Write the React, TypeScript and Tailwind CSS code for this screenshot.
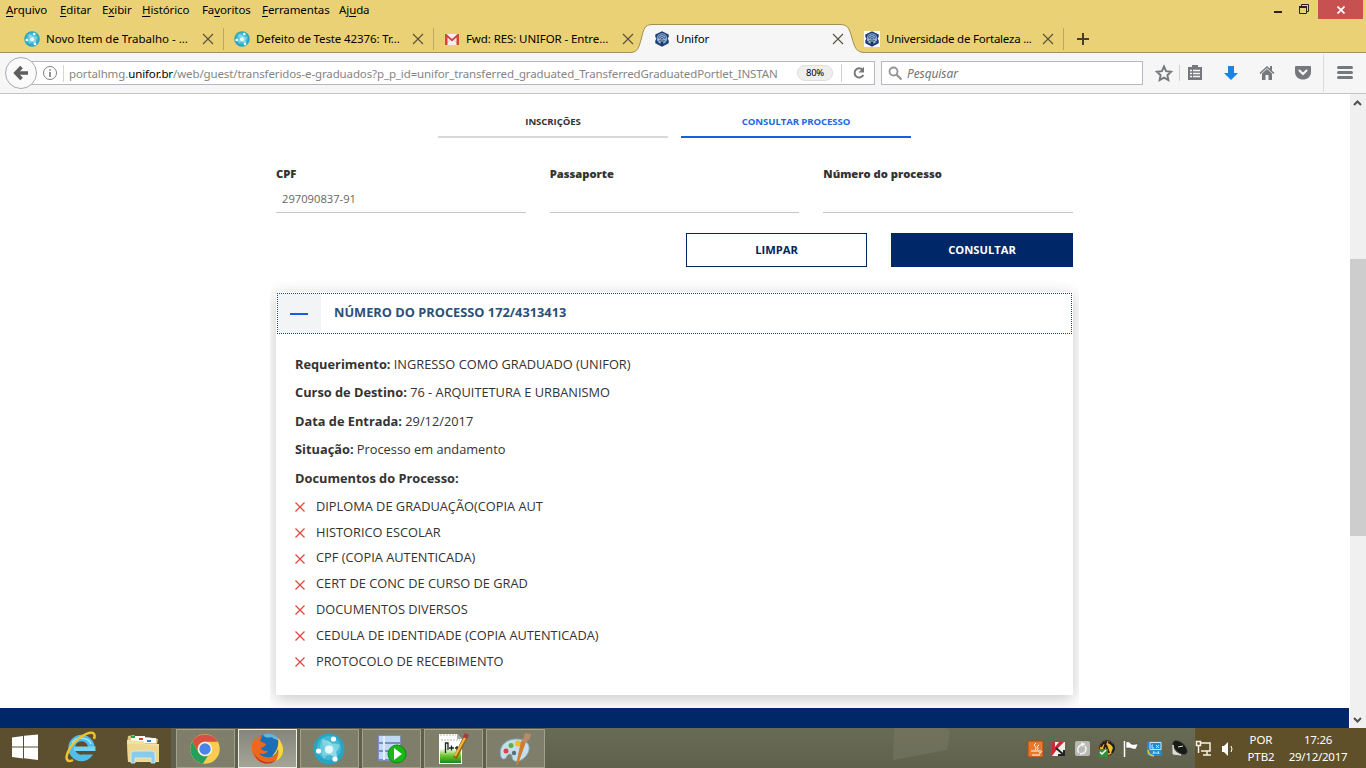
import React from "react";

const globe = (
  <>
    <circle cx="16" cy="16" r="15.5" fill="#26a6c4" />
    <circle cx="16" cy="15" r="12" fill="#54c3da" opacity=".6" />
    <path d="M9 7c7-1 14 4 15 17-7 0-13-5-15-17Z" fill="#a5e3ec" opacity=".8" />
    <path d="M27 12c-2 8-9 12-18 10 1-9 9-14 18-10Z" fill="#8fdbe8" opacity=".75" />
    <path d="M10 5c7 4 8 14 1 21-5-7-5-15-1-21Z" fill="#7ed3e2" opacity=".65" />
    <circle cx="16" cy="16.5" r="4" fill="#e4fafc" />
    <circle cx="20.5" cy="6" r="2.6" fill="#fff" />
    <circle cx="5.5" cy="18" r="2.6" fill="#fff" />
    <circle cx="22" cy="26" r="2.6" fill="#fff" />
  </>
);

const GlobeIcon = ({ className }: { className: string }) => (
  <svg viewBox="0 0 32 32" className={className}>{globe}</svg>
);

const GmailIcon = () => (
  <svg viewBox="0 0 16 16" className="size-4 shrink-0">
    <path d="M1 3h14v11H1z" fill="#f3f1ee" />
    <path d="M3 12l5-5 5 5" fill="none" stroke="#d5d0cc" />
    <path d="M1 14V3h1.500L8 8l5.500-5H15v11h-2.500V6.500L8 10.500l-4.500-4V14Z" fill="#d8453a" />
  </svg>
);

const UniforIcon = ({ boxed = false }: { boxed?: boolean }) => (
  <svg viewBox="0 0 16 16" className="size-4 shrink-0">
    {boxed && <path d="M0 0h16v16H0z" fill="#fff" />}
    <path d="M8 .3 14.700 3.500V6L13.700 7.500l1 2v2.700L8 15.700 1.300 12.200V9.500l1-2L1.300 6V3.500Z" fill="#1c3f78" />
    <circle cx="8" cy="7.500" r="5.200" fill="#9db5d2" />
    <path d="M4 7.500a4 4 0 0 1 8 0M5.500 8a2.500 2.500 0 0 1 5 0M4.500 10.500C6 8.500 10 8.500 11.500 10.500M7 7.500h2" fill="none" stroke="#23497f" strokeWidth=".8" />
    <path d="M6.500 10.500h3l-.5 4H7Z" fill="#15386c" />
  </svg>
);

const CloseX = () => (
  <svg viewBox="0 0 12 12" className="size-3 shrink-0">
    <path d="M1 1l10 10M11 1 1 11" stroke="#58503a" strokeWidth="1.1" />
  </svg>
);

type TabProps = { icon: React.ReactNode; title: string; track: string; active?: boolean; sep?: boolean };

const Tab = ({ icon, title, track, active, sep }: TabProps) => (
  <div className="relative flex h-7 w-[210px] items-center pl-2.5">
    {active && (
      <svg viewBox="0 0 236 30" className="absolute -left-[13px] top-0 h-[30px] w-[236px]">
        <path d="M0 28.500C7 28 8 23 10.500 14 12.500 5 14 .5 21 .5H209C217 .5 218.500 5 221 14c2.500 9 4 14.500 13 14.500L236 30H0Z" fill="#f6f6f6" />
        <path d="M0 28.500C7 28 8 23 10.500 14 12.500 5 14 .5 21 .5H209C217 .5 218.500 5 221 14c2.500 9 4 14.500 13 14.500" fill="none" stroke="#a18d4d" />
      </svg>
    )}
    <div className="relative flex w-full items-center pt-0.5">
      {icon}
      <span className={`ml-1.5 w-[156px] whitespace-nowrap text-[11.5px] leading-5 ${track}`}>{title}</span>
      <CloseX />
    </div>
    {sep && <span className="absolute right-0 top-1 h-[22px] w-px bg-[#bca766]" />}
  </div>
);

const menu = [
  ["", "A", "rquivo", "w-[54px]"],
  ["", "E", "ditar", "w-[42px]"],
  ["E", "x", "ibir", "w-10"],
  ["", "H", "istórico", "w-[60px]"],
  ["Fa", "v", "oritos", "w-[60px]"],
  ["", "F", "erramentas", "w-[77px]"],
  ["Aj", "u", "da", "w-[50px]"],
];

const Chrome = () => (
  <header className="h-[94px] shrink-0 bg-[#ebd176] text-black">
    <div className="flex h-6 items-start justify-between">
      <nav className="flex pl-1.5 text-[11.5px] leading-5 tracking-[-0.1px]">
        {menu.map(([a, u, b, c]) => (
          <span key={u + b} className={c}>{a}<span className="underline underline-offset-2">{u}</span>{b}</span>
        ))}
      </nav>
      <div className="flex h-[19px] pr-[3px]">
        <svg viewBox="0 0 50 19" className="h-[19px] w-[50px]">
          <path d="M6 11h8v2H6z" fill="#28251a" />
          <path d="M31.500 6.500h7v7h-7zM33.500 6V4.500h7v7H39" fill="none" stroke="#28251a" />
          <path d="M31 6h8v2h-8z" fill="#28251a" />
        </svg>
        <div className="flex w-[45px] items-center justify-center bg-[#c75050]">
          <svg viewBox="0 0 8 8" className="size-2"><path d="M.5.5l7 7m0-7-7 7" stroke="#fff" strokeWidth="1.7" /></svg>
        </div>
      </div>
    </div>
    <div className="flex h-[29px] border-b border-[#a3935b] pl-3.5">
      <Tab icon={<GlobeIcon className="size-4 shrink-0" />} title="Novo Item de Trabalho - ..." track="tracking-[-0.02px]" sep />
      <Tab icon={<GlobeIcon className="size-4 shrink-0" />} title="Defeito de Teste 42376: Tr..." track="tracking-[-0.12px]" sep />
      <Tab icon={<GmailIcon />} title="Fwd: RES: UNIFOR - Entre..." track="tracking-[-0.1px]" />
      <Tab icon={<UniforIcon />} title="Unifor" track="tracking-[-0.2px]" active />
      <Tab icon={<UniforIcon boxed />} title="Universidade de Fortaleza ..." track="tracking-[-0.23px]" sep />
      <svg viewBox="0 0 12 12" className="ml-[13px] mt-[9px] size-3"><path d="M6 0v12M0 6h12" stroke="#45412f" strokeWidth="2" /></svg>
    </div>
    <div className="flex h-[41px] items-center border-b border-[#c3c3c6] bg-[#f6f6f6]">
      <div className="relative z-10 ml-[5px] flex size-8 shrink-0 items-center justify-center rounded-full border border-[#a8abb3] bg-[#fafafa]">
        <svg viewBox="0 0 16 16" className="size-4"><path d="M8.500 2 2.800 8l5.700 6M3.500 8H15" fill="none" stroke="#5e5e60" strokeWidth="3.6" /></svg>
      </div>
      <div className="-ml-4 flex h-6 w-[854px] shrink-0 items-center border border-[#b4b8c6] bg-white pl-[20px]">
        <svg viewBox="0 0 16 16" className="size-4 shrink-0">
          <circle cx="8" cy="8" r="6.5" fill="none" stroke="#808080" />
          <path d="M7.200 7h1.600v5H7.200zM7.200 4.200h1.600v1.600H7.200z" fill="#777" />
        </svg>
        <span className="ml-[5px] h-[17px] w-px shrink-0 bg-[#d5d5d8]" />
        <span className="ml-[5px] w-[710px] shrink-0 whitespace-nowrap pt-px text-[11.5px] tracking-[-0.12px] text-[#858585]">
          portalhmg.<span className="text-black">unifor.br</span>/web/guest/transferidos-e-graduados?p_p_id=unifor_transferred_graduated_TransferredGraduatedPortlet_INSTAN
        </span>
        <span className="ml-[18px] flex h-4 w-9 shrink-0 items-center justify-center rounded-full border border-[#dedede] bg-[#efefef] text-[9.5px] tracking-[-0.3px]">80%</span>
        <span className="ml-2 h-[18px] w-px shrink-0 bg-[#d0d0d3]" />
        <svg viewBox="0 0 14 14" className="ml-2.5 size-3.5 shrink-0">
          <path d="M10.600 3.800A4.600 4.600 0 1 0 11.300 9" fill="none" stroke="#77777a" strokeWidth="2" />
          <path d="M12 .8v5.700H6.500Z" fill="#77777a" />
        </svg>
      </div>
      <div className="ml-[6px] flex h-6 w-[262px] shrink-0 items-center border border-[#b4b8c6] bg-white pl-1.5">
        <svg viewBox="0 0 14 14" className="size-3.5"><circle cx="5.5" cy="5.5" r="4" fill="none" stroke="#949494" strokeWidth="1.8" /><path d="m8.500 8.500 5 5" stroke="#949494" strokeWidth="2.2" /></svg>
        <span className="ml-[5px] pt-px text-[12px] italic tracking-[-0.1px] text-[#737373]">Pesquisar</span>
      </div>
      <svg viewBox="0 0 223 40" className="h-10 w-[223px] shrink-0" fill="none" stroke="#77787d">
        <path d="m21 13.500 2.100 4.700 5 .6-3.700 3.400 1 5-4.400-2.500-4.400 2.500 1-5-3.700-3.400 5-.6Z" strokeWidth="1.9" />
        <path d="M36.500 12v16" stroke="#d0d0d2" />
        <path d="M45 14h14v13H45z" fill="#77787d" stroke="none" />
        <path d="M49 12h6v3h-6z" fill="#77787d" stroke="none" />
        <path d="M47 17.500h2m1 0h7M47 20.500h2m1 0h7M47 23.500h2m1 0h7" stroke="#f6f6f6" strokeWidth="1.6" />
        <path d="M85 13h6v7h4l-7 7-7-7h4Z" fill="#1b82e8" stroke="none" />
        <path d="m117 20.500 7-6.500 7 6.500" strokeWidth="1.6" />
        <path d="m119 20.500 5-4.500 5 4.500V27h-3.500v-5h-3v5H119ZM127 13h2v4h-2Z" fill="#77787d" stroke="none" />
        <path d="M152 14q0-1 1-1h14q1 0 1 1v5c0 10-16 10-16 0Z" fill="#77787d" stroke="none" />
        <path d="m156.500 17.500 3.500 3.500 3.500-3.500" stroke="#f6f6f6" strokeWidth="2.1" strokeLinecap="round" />
        <path d="M180.500 1v38" stroke="#dcdcde" />
        <path d="M195.500 14.500h13M195.500 19.500h13M195.500 24.500h13" strokeWidth="3" strokeLinecap="round" />
      </svg>
    </div>
  </header>
);

const Field = ({ label, value }: { label: string; value?: string }) => (
  <label className="flex h-[50px] flex-col border-b border-[#c6c6c6]">
    <span className="h-[21px] text-[11.2px] font-extrabold leading-[21px] text-[#333]">{label}</span>
    <span className="pl-1.5 pt-[5px] text-[11.2px] leading-[20px] text-[#666]">{value}</span>
  </label>
);

const details = [
  ["Requerimento:", "INGRESSO COMO GRADUADO (UNIFOR)"],
  ["Curso de Destino:", "76 - ARQUITETURA E URBANISMO"],
  ["Data de Entrada:", "29/12/2017"],
  ["Situação:", "Processo em andamento"],
  ["Documentos do Processo:", ""],
];

const docs = [
  "DIPLOMA DE GRADUAÇÃO(COPIA AUT",
  "HISTORICO ESCOLAR",
  "CPF (COPIA AUTENTICADA)",
  "CERT DE CONC DE CURSO DE GRAD",
  "DOCUMENTOS DIVERSOS",
  "CEDULA DE IDENTIDADE (COPIA AUTENTICADA)",
  "PROTOCOLO DE RECEBIMENTO",
];

const Page = () => (
  <div className="flex h-[634px] w-[1350px] flex-col bg-white font-['Open_Sans',sans-serif]">
    <div className="ml-[438px] flex gap-[13px] pt-[11px] text-center text-[9.6px] font-bold leading-[33px] tracking-[-0.1px]">
      <div className="h-[33px] w-[230px] border-b-2 border-[#d9d9d9] text-[#333]">INSCRIÇÕES</div>
      <div className="h-[33px] w-[230px] border-b-2 border-[#0f63e0] text-[#1f66e6]">CONSULTAR PROCESSO</div>
    </div>
    <div className="ml-[276px] mt-[25px] grid w-[797px] grid-cols-3 gap-6">
      <Field label="CPF" value="297090837-91" />
      <Field label="Passaporte" />
      <Field label="Número do processo" />
    </div>
    <div className="ml-[686px] mt-5 flex gap-6 text-[11.2px] font-bold">
      <button className="h-[34px] w-[181px] border border-[#002561] text-[#002561]">LIMPAR</button>
      <button className="h-[34px] w-[182px] bg-[#002868] text-white">CONSULTAR</button>
    </div>
    <div className="ml-[270px] h-[441px] w-[809px] overflow-hidden px-1.5 pt-[25px]">
      <section className="h-[403px] bg-white p-px text-[12.8px] text-[#333] shadow-[0_4px_16px_rgba(0,0,0,0.22)]">
        <div className="flex h-[41px] items-stretch border border-dotted border-[#1d4a6e]">
          <div className="flex w-[43px] items-center bg-[#f3f4f6] pl-3"><span className="h-0.5 w-[18px] bg-[#0f63e0]" /></div>
          <h2 className="ml-[13px] text-[12.8px] font-bold leading-[37px] text-[#2b5077]">NÚMERO DO PROCESSO 172/4313413</h2>
        </div>
        <div className="pl-[18px] pt-[15.9px]">
          {details.map(([k, v]) => (
            <p key={k} className="h-[28.5px] whitespace-nowrap leading-[28px]"><b>{k}</b> {v}</p>
          ))}
          <ul className="pt-[1.5px]">
            {docs.map((d) => (
              <li key={d} className="flex h-[25.8px] items-center whitespace-nowrap leading-[25.8px]">
                <svg viewBox="0 0 10 10" className="mr-[11px] mt-px size-2.5"><path d="M.5.5l9 9m0-9-9 9" stroke="#e24840" strokeWidth="1.3" /></svg>
                <span>{d}</span>
              </li>
            ))}
          </ul>
        </div>
      </section>
    </div>
    <div className="h-5 w-[1349px] shrink-0 bg-[#002868]" />
  </div>
);

const ScrollBar = () => (
  <div className="flex w-4 flex-col justify-between bg-[#f0f0f0]">
    <svg viewBox="0 0 16 17" className="h-[17px] w-4"><path d="m4 11 3.500-3.500L11 11" fill="none" stroke="#505050" strokeWidth="2" /></svg>
    <div className="mb-[175px] mt-[148px] flex-1 bg-[#cdcdcd]" />
    <svg viewBox="0 0 16 17" className="h-[17px] w-4"><path d="m4 7 3.500 3.500L11 7" fill="none" stroke="#505050" strokeWidth="2" /></svg>
  </div>
);

const TaskButton = ({ children, active = false }: { children: React.ReactNode; active?: boolean }) => (
  <div className={`flex h-[39px] w-[58.5px] items-center justify-center border ${active ? "border-[#eeeee8] bg-linear-to-b from-[#85857c] to-[#a5a597]" : "border-[#a2a28c] bg-[#7e7e6a]"}`}>
    {children}
  </div>
);

const big = "size-8";

const TaskBar = () => (
  <footer className="flex h-10 text-white">
    <div className="h-10 w-[171px] bg-[#5b4f2f]">
      <svg viewBox="0 0 171 40" className="h-10 w-[171px]">
        <path d="M12 9.500 23 8v10.500H12Zm12-1.700L38 6.500v12H24ZM12 19.500h11V30.500l-11-1.500Zm12 0h14v12.500l-14-1.700Z" fill="#fff" />
        <circle cx="81.500" cy="20" r="10" fill="none" stroke="#51bdea" strokeWidth="6.500" />
        <path d="M74 18.500h21.500v4.500H74Z" fill="#74d5f5" />
        <path d="M84 23h13v3.500H84Z" fill="#5b4f2f" />
        <path d="M72 15c3-6 16-7 19 1" fill="none" stroke="#a3e6fb" strokeWidth="1.5" />
        <path d="M73 32c-6 3-8-1-5-8C73 12 88 3 93 5c2 1 2 3 1 6" fill="none" stroke="#f2c22e" strokeWidth="2.5" />
        <path d="m128 8 6-1 2 2h12l10 2-1 5H127Z" fill="#d8c887" />
        <path d="M131 8h14v5h-14zM142 10h14v5h-14z" fill="#fff" />
        <path d="M131 8h4v2h-4z" fill="#25a53b" /><path d="M139 10h4v2h-4z" fill="#d44435" /><path d="M147 12h4v2h-4z" fill="#2684d0" />
        <path d="m127 12 17 1 1 3h14v18h-31Z" fill="#f4e2a0" />
        <path d="M127 16h12l20 2v15l-31 1Z" fill="#ebd286" opacity=".7" />
        <path d="M131 35V26q0-3 3-3h18q3 0 3 3v9h-4v-5h-16v5Z" fill="#8bcbea" stroke="#d4f2fc" strokeWidth=".8" />
      </svg>
    </div>
    <div className="flex w-[1024px] justify-between bg-linear-to-b from-[#686b54] to-[#60614d]">
      <div className="flex gap-[3.5px] bg-[#5f604b] pl-[5px] pt-px">
        <TaskButton>
          <svg viewBox="0 0 32 32" className={big}>
            <circle cx="16" cy="16" r="14.7" fill="#f9ce50" />
            <path d="M3.300 8.700A14.700 14.700 0 0 1 28.700 8.700H16a7.300 7.300 0 0 0-6.400 11Z" fill="#d94f41" />
            <path d="M3.300 8.700 9.700 19.700A7.300 7.300 0 0 0 19 22.700l-5 7.900A14.700 14.700 0 0 1 3.300 8.700Z" fill="#24a05b" />
            <circle cx="16" cy="16" r="7.2" fill="#f5f5ee" /><circle cx="16" cy="16" r="5.7" fill="#4b83e8" />
          </svg>
        </TaskButton>
        <TaskButton active>
          <svg viewBox="0 0 32 32" className={big}>
            <circle cx="17" cy="15" r="14" fill="#1c6fb5" />
            <path d="M12 2c6-3 15 0 18 7-3-3-7-2-9-5-3 1-7 1-9-2Z" fill="#64b4e2" />
            <path d="M3 5c-1 4-3 8-2 13 3 12 14 16 24 9 6-4 7-12 4-19 1 8-3 14-9 16-5 1-9 0-12-4 4 2 7 1 9-2-3 0-6 0-7-3 2-1 5-2 5-4l-6-3 2-5c-3 0-5 2-6 4Z" fill="#ed681f" />
            <path d="M27 5c8 9 6 19-2 23 2-5 3-8 2-12-1 4-3 6-6 7 5-5 7-10 6-18Z" fill="#fbd63c" />
            <path d="M3 20c5 9 14 12 22 7-7 7-19 3-22-7Z" fill="#b92e24" />
          </svg>
        </TaskButton>
        <TaskButton><GlobeIcon className={big} /></TaskButton>
        <TaskButton>
          <svg viewBox="0 0 32 32" className={big}>
            <path d="M3 2h23v26H3z" fill="#7892ba" />
            <path d="M4 3h21v6H4zM4 11h21v6H4zM4 19h21v7H4z" fill="#c3d8f5" /><path d="M9 3v24" stroke="#e3eefd" strokeWidth="2" />
            <circle cx="22" cy="21" r="9" fill="#18b817" stroke="#108710" /><path d="m19 15 8 6-8 6Z" fill="#fff" />
          </svg>
        </TaskButton>
        <TaskButton>
          <svg viewBox="0 0 32 32" className={big}>
            <defs><linearGradient id="note" x1="0" y1="0" x2="0" y2="1"><stop offset=".3" stopColor="#fff" /><stop offset=".65" stopColor="#70c62b" /><stop offset="1" stopColor="#188819" /></linearGradient></defs>
            <path d="M2 1h18l5 5v25H2Z" fill="#fff" /><path d="M3 9h21v21H3Z" fill="url(#note)" />
            <path d="M3 2h16M4 7h19" stroke="#aeb6b0" strokeDasharray="2 1" /><path d="m20 1 5 5h-5Z" fill="#a7aaa7" />
            <path d="M8.500 20V10h2.500v7M12 15h5m-2.500-2.500v5M18 15h4m-2-2v4" fill="none" stroke="#182619" strokeWidth="1.3" />
            <path d="M29 3 18 25" stroke="#955e15" strokeWidth="4" /><path d="M29 3 18 23" stroke="#f0b833" strokeWidth="2.3" /><path d="m28 0 4 2-2 4-4-2Z" fill="#a93a3e" />
          </svg>
        </TaskButton>
        <TaskButton>
          <svg viewBox="0 0 32 32" className={big}>
            <path d="M2 24C-1 14 6 6 18 6c13 0 16 11 7 19-7 6-12 3-12-1 0-5-5-3-6 1-2 2-4 1-5-1Z" fill="#c2dfeb" stroke="#81aabc" />
            <circle cx="7" cy="18" r="2.5" fill="#db4449" /><circle cx="12" cy="12.5" r="2.5" fill="#65ac47" /><circle cx="19" cy="10.5" r="3" fill="#efbc35" /><circle cx="15" cy="20" r="2.2" fill="#506f82" />
            <path d="m27 9-8 22-2 1 5-24Z" fill="#d47b32" /><path d="m27 10-5-2c3-2 3-5 4-8l6 1c0 4-2 5-5 9Z" fill="#b88b66" />
          </svg>
        </TaskButton>
      </div>
      <svg viewBox="0 0 350 40" className="h-10 w-[350px]">
        <path d="M49 0h52l4 4-3 18-54 10Z" fill="#777760" opacity=".6" />
        <path d="M184 13h13q1 0 1 1v14q0 1-1 1h-13q-1 0-1-1V14q0-1 1-1Z" fill="#e9782b" stroke="#ae4b13" />
        <path d="M191 15c-5 4 3 3-1 7m4-5c-4 2 1 3-2 5m-6 1h8c4-1 3 2 0 2m-7 2h8" fill="none" stroke="#fff" />
        <path d="M207 14h13v14h-13z" fill="#efefea" /><path d="M207 14v14l6-8 6-6h-5l-4 5v-5Z" fill="#cf2937" /><path d="m211 20 8 7m0-5v5h-6" fill="none" stroke="#222" strokeWidth="2" />
        <rect x="230" y="13" width="15" height="15" rx="2" fill="#b8b8b4" /><path d="M234 25a5 5 0 0 1 2-8l4-1m0 2a5 5 0 0 1-1 7l-4 1" fill="none" stroke="#f3f3f0" strokeWidth="1.5" /><path d="m236 14 4 2-3 3Z" fill="#f3f3f0" />
        <circle cx="262" cy="20" r="7.5" fill="#f0bd2d" stroke="#2d2d19" /><path d="M256 19q1-4 5-5l-2 7m4-7q5 2 6 6l-2 5m-6-8 3 8" fill="none" stroke="#201e17" strokeWidth="2" /><path d="M254 21h9v8h-9z" fill="#269532" /><path d="m255 24 2 2 4-4" fill="none" stroke="#fff" strokeWidth="1.5" />
        <path d="M279.500 13v16" stroke="#fff" strokeWidth="1.5" /><path d="M281 14c4-1 4 1 5 2 3 1 4 0 7 0l-2 5c-3 1-5-1-6-1h-4Z" fill="#fff" stroke="#353a32" strokeWidth=".5" />
        <rect x="302" y="13" width="15" height="15" rx="2" fill="#2589cf" /><path d="M305 14.500h11v7h-11zM308 17h-1v3h2m2-3 3 3m0-3-3 3M309 23l-1 3m5-3 1 3m-5-1h5" fill="none" stroke="#d9f0ff" strokeWidth=".9" />
        <path d="M303 22q0 5 6 6" stroke="#e4c53d" strokeWidth="1.5" fill="none" />
        <ellipse cx="335" cy="19.500" rx="9" ry="5" transform="rotate(43 335 19.5)" fill="#171a17" stroke="#55594f" strokeWidth=".7" /><path d="m333 19 5-1M328 17c0 5 3 8 8 10l-8-1Z" stroke="#ddddd5" fill="#ddddd5" />
      </svg>
    </div>
    <div className="flex w-[171px] items-center bg-[#5f5029]">
      <svg viewBox="0 0 40 40" className="h-10 w-10">
        <path d="M6 15h9v8H6M8 27h8m-4-4v4M1.500 13.500h4v4h-4zM3.500 18v7" fill="none" stroke="#f4f2e9" strokeWidth="1.5" />
        <path d="M27 18h2l4-4v14l-4-4h-2Z" fill="#fff" /><path d="M36 18q2 3 0 6" fill="none" stroke="#fff" />
      </svg>
      <div className="ml-[6px] w-10 text-center text-[11.5px] leading-[17px] tracking-[-0.1px]">POR<br />PTB2</div>
      <div className="ml-[2px] w-[70px] text-center text-[11.5px] leading-[17px] tracking-[-0.25px]">17:26<br />29/12/2017</div>
    </div>
  </footer>
);

export default function App() {
  return (
    <div className="flex h-[768px] w-[1366px] flex-col overflow-hidden bg-white font-['Noto_Sans',sans-serif]">
      <Chrome />
      <div className="flex h-[634px] shrink-0"><Page /><ScrollBar /></div>
      <TaskBar />
    </div>
  );
}
